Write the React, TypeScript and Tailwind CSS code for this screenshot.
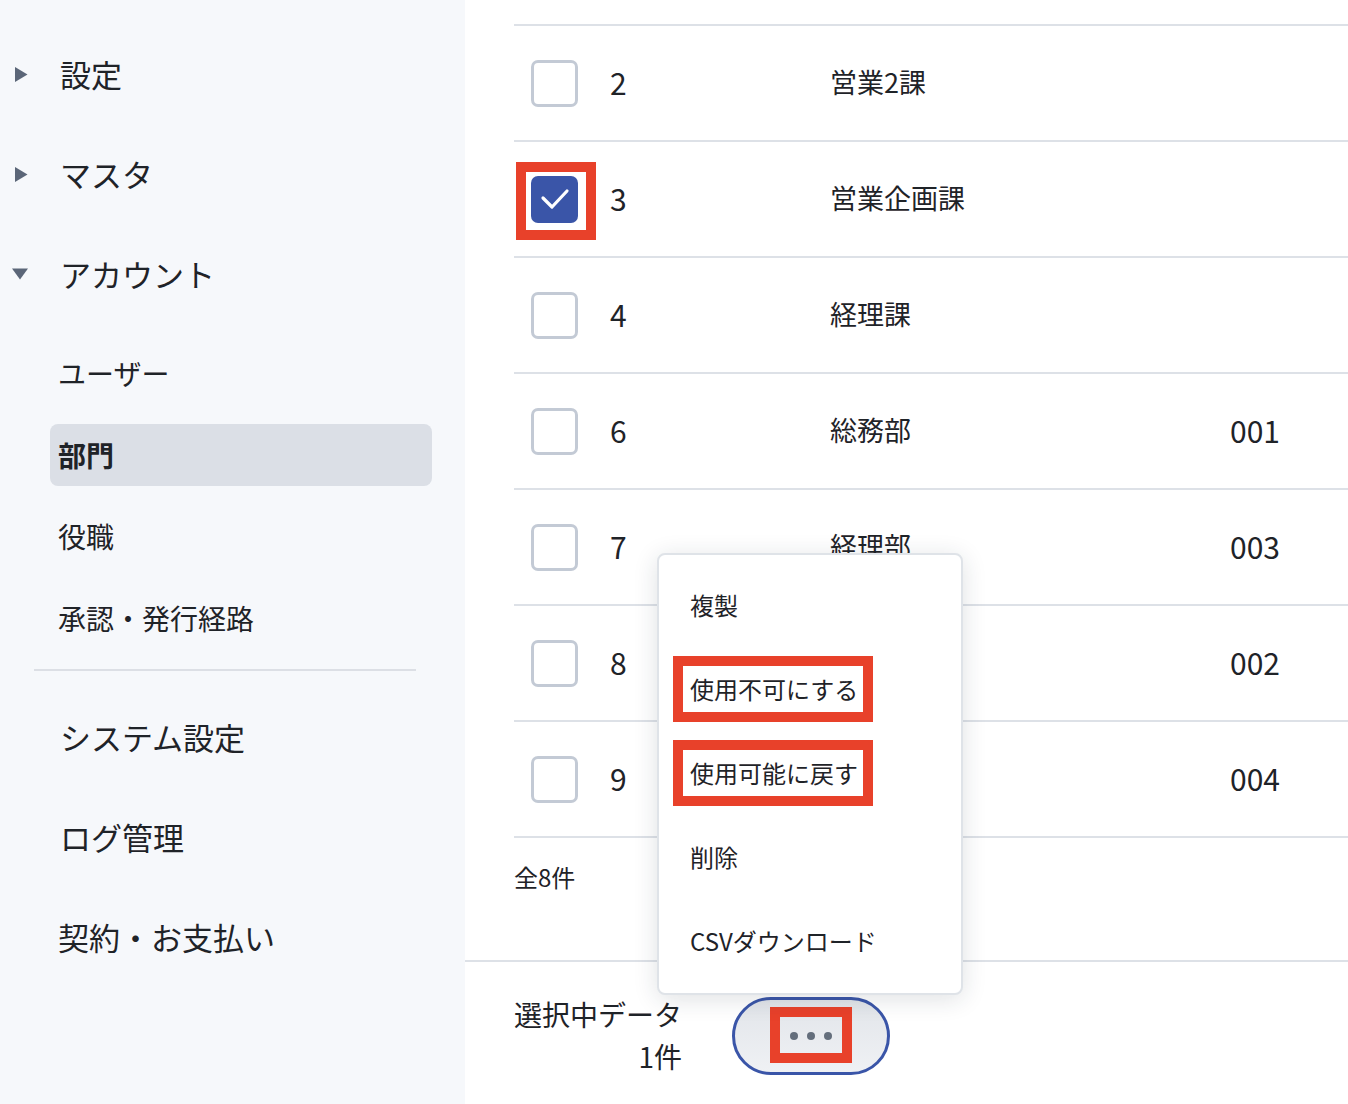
import React from "react";

const font = { fontFamily: '"Noto Sans CJK JP", "Noto Sans", sans-serif' };

interface Row {
  id: string;
  name: string;
  code: string;
  checked?: boolean;
}

const rows: Row[] = [
  { id: "2", name: "営業2課", code: "" },
  { id: "3", name: "営業企画課", code: "", checked: true },
  { id: "4", name: "経理課", code: "" },
  { id: "6", name: "総務部", code: "001" },
  { id: "7", name: "経理部", code: "003" },
  { id: "8", name: "", code: "002" },
  { id: "9", name: "", code: "004" },
];

const menuItems = ["複製", "使用不可にする", "使用可能に戻す", "削除", "CSVダウンロード"];

function Caret({ open }: { open?: boolean }) {
  return open ? (
    <svg width="18" height="14" viewBox="0 0 18 14" className="shrink-0">
      <path d="M1 1.5 L17 1.5 L9 12.5 Z" fill="#5b6678" />
    </svg>
  ) : (
    <svg width="14" height="17" viewBox="0 0 14 17" className="shrink-0">
      <path d="M1 1 L13.5 8.5 L1 16 Z" fill="#5b6678" />
    </svg>
  );
}

function Checkbox({ checked }: { checked?: boolean }) {
  if (checked) {
    return (
      <div className="relative w-[47px] h-[47px]">
        <div className="w-[47px] h-[47px] rounded-[7px] bg-[#3a55a8] flex items-center justify-center">
          <svg width="30" height="24" viewBox="0 0 30 24">
            <path d="M3 11 L12 20 L27 4" fill="none" stroke="#ffffff" strokeWidth="3.2" strokeLinecap="round" strokeLinejoin="round" />
          </svg>
        </div>
        <div className="absolute left-[-15px] top-[-14px] w-[80px] h-[78px] border-[10px] border-[#e8412a]" />
      </div>
    );
  }
  return <div className="w-[47px] h-[47px] rounded-[7px] border-[3px] border-[#c3cad5] bg-white" />;
}

export default function App() {
  return (
    <div className="flex h-[1104px] w-[1348px] overflow-hidden text-[#1f2328]" style={font}>
      {/* sidebar */}
      <aside className="w-[465px] shrink-0 bg-[#f6f8fb] flex flex-col pt-[24px]">
        {["設定", "マスタ"].map((label) => (
          <div key={label} className="flex items-center h-[100px] pl-[14px]">
            <Caret />
            <span className="ml-[32px] text-[31px]">{label}</span>
          </div>
        ))}
        <div className="flex items-center h-[100px] pl-[11px]">
          <Caret open />
          <span className="ml-[31px] text-[31px]">アカウント</span>
        </div>
        <div className="flex flex-col pl-[50px] pr-[33px] mt-[7px]">
          <div className="h-[83px] flex items-center pl-[8px] text-[28px]">ユーザー</div>
          <div className="h-[62px] mt-[10px] mb-[9px] flex items-center pl-[8px] text-[28px] font-bold bg-[#dbdfe6] rounded-[8px]">
            部門
          </div>
          <div className="h-[82px] flex items-center pl-[8px] text-[28px]">役職</div>
          <div className="h-[82px] flex items-center pl-[8px] text-[28px]">承認・発行経路</div>
        </div>
        <div className="mx-[34px] w-[382px] border-t-2 border-[#dcdfe5] mt-[10px]" />
        <div className="flex flex-col pl-[60px] mt-[16px]">
          {["システム設定", "ログ管理", "契約・お支払い"].map((label, i) => (
            <div key={label} className={"h-[100px] flex items-center text-[31px] " + (i === 2 ? "ml-[-2px]" : "")}>
              {label}
            </div>
          ))}
        </div>
      </aside>

      {/* main */}
      <main className="relative flex-1 bg-white flex flex-col">
        <div className="flex-1 pl-[49px] pt-[24px]">
          <div className="border-t-2 border-[#dde1e7]">
            {rows.map((r) => (
              <div key={r.id} className="h-[116px] border-b-2 border-[#dde1e7] flex items-center">
                <div className="w-[96px] pl-[17px]">
                  <Checkbox checked={r.checked} />
                </div>
                <div className="w-[220px] text-[30px] mt-[-2px]">{r.id}</div>
                <div className="w-[400px] text-[27px] mt-[-2px]">{r.name}</div>
                <div className="text-[30px] mt-[-2px]">{r.code}</div>
              </div>
            ))}
          </div>
          <div className="pt-[21px] text-[24px]">全8件</div>
        </div>

        <div className="h-[144px] border-t-2 border-[#dde1e7] flex items-center pl-[49px]">
          <div className="flex flex-col items-end text-[28px] leading-[42px] mt-[4px]">
            <span>選択中データ</span>
            <span>1件</span>
          </div>
          <button className="relative ml-[50px] mt-[6px] w-[158px] h-[78px] rounded-full border-[3px] border-[#3a55a8] bg-gradient-to-b from-[#e2e5ea] to-[#eff1f4] flex items-center justify-center gap-[9px]">
            <span className="w-[8px] h-[8px] rounded-full bg-[#646e7c]" />
            <span className="w-[8px] h-[8px] rounded-full bg-[#646e7c]" />
            <span className="w-[8px] h-[8px] rounded-full bg-[#646e7c]" />
            <span className="absolute left-[35px] top-[7px] w-[82px] h-[56px] border-[10px] border-[#e8412a]" />
          </button>
        </div>

        {/* dropdown menu */}
        <div className="absolute left-[192px] top-[553px] w-[306px] h-[442px] bg-white rounded-[8px] border-2 border-[#dfe3e8] shadow-[0_4px_24px_rgba(30,40,60,0.14)] flex flex-col pt-[8px]">
          {menuItems.map((item, i) => (
            <div key={item} className="relative h-[84px] flex items-center pl-[31px] text-[24px]">
              {item}
              {(i === 1 || i === 2) && (
                <span className="absolute left-[14px] top-[9px] w-[200px] h-[66px] border-[10px] border-[#e8412a]" />
              )}
            </div>
          ))}
        </div>
      </main>
    </div>
  );
}
